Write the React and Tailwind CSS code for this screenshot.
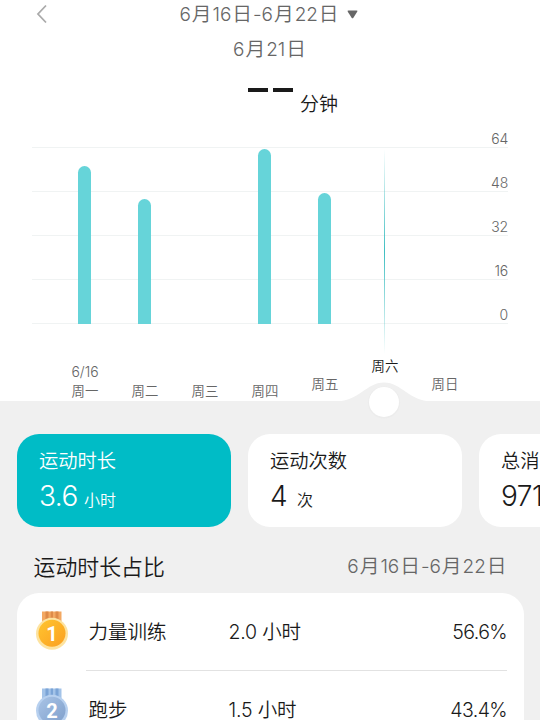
const days = [
  { label: "周一", date: "6/16", bar: 158 },
  { label: "周二", bar: 125 },
  { label: "周三", bar: 0 },
  { label: "周四", bar: 175 },
  { label: "周五", bar: 131, pad: "pb-[7px]" },
  { label: "周六", bar: 0, pad: "pb-[25px]", active: true },
  { label: "周日", bar: 0, pad: "pb-[7px]" },
];

const ticks = [64, 48, 32, 16, 0];

const stats = [
  { title: "运动时长", value: "3.6", unit: "小时", gap: "gap-[6px]", active: true },
  { title: "运动次数", value: "4", unit: "次", gap: "gap-[10px]" },
  { title: "总消", value: "971", gap: "gap-[6px]" },
];

const rows = [
  { rank: 1, name: "力量训练", time: "2.0", percent: "56.6%" },
  { rank: 2, name: "跑步", time: "1.5", percent: "43.4%" },
];

const medalColors = {
  1: { rim: "#fde3a0", from: "#ffc530", to: "#fb9f20", band: "#f3a862", stripe: "#de8a48" },
  2: { rim: "#b7d0ef", from: "#a9c4e6", to: "#7f9fcb", band: "#a3c3e8", stripe: "#7ba4d6" },
};

function Medal({ rank }) {
  const c = medalColors[rank];
  return (
    <svg width="34" height="42" viewBox="0 0 34 42" className="shrink-0">
      <defs>
        <linearGradient id={`medal-${rank}`} x1="0" y1="0" x2="1" y2="1">
          <stop offset="0" stopColor={c.from} />
          <stop offset="1" stopColor={c.to} />
        </linearGradient>
      </defs>
      <path d="M7 .5h19.500v12H7z" fill={c.band} />
      <path d="M10.500 .5h3v12h-3zM15.700 .5h2.300v12h-2.300zM20.500 .5h3v12h-3z" fill={c.stripe} />
      <circle cx="17" cy="22.800" r="16" fill={c.rim} />
      <circle cx="17" cy="22.300" r="13.500" fill={`url(#medal-${rank})`} />
      <text
        x="17"
        y="29.500"
        textAnchor="middle"
        fontSize="20"
        fill="#fff"
        className="font-['Roboto',sans-serif] font-bold"
      >
        {rank}
      </text>
    </svg>
  );
}

// Han characters are set a little larger and looser than the digits.
function DateText({ children }) {
  return (
    <span className="whitespace-nowrap text-[19px] text-[#666]">
      {children.split(/([月日])/).map((part, i) => (
        <span key={i} className={i % 2 ? "px-px text-[19.800px]" : "tracking-[-0.1px]"}>
          {part}
        </span>
      ))}
    </span>
  );
}

function Header() {
  return (
    <header className="relative flex flex-col items-center text-[19px]">
      <svg width="12" height="20" viewBox="0 0 12 20" className="absolute left-9 top-1" fill="none" stroke="#aaa" strokeWidth="1.8">
        <path d="M10 1.500 2 10l8 8.500" />
      </svg>
      <div className="flex h-7 items-center gap-[7px] pr-[3px] pt-px">
        <DateText>6月16日-6月22日</DateText>
        <svg width="11" height="9" viewBox="0 0 11 9" fill="#666" className="mb-px">
          <path d="M1.500.5h8q1.500 0 .7 1.300L6.400 7.700q-.9 1-1.800 0L.8 1.800Q0 .5 1.500.5z" />
        </svg>
      </div>
      <div className="mt-[7px] flex h-7 items-center pt-px">
        <DateText>6月21日</DateText>
      </div>
      <div className="mt-6 flex h-8 gap-[7px] pl-[46px] text-[#1a1a1a]">
        <div className="flex gap-[5px] pt-[1px]">
          <span className="h-1 w-5 bg-[#1a1a1a]" />
          <span className="h-1 w-5 bg-[#1a1a1a]" />
        </div>
        <span className="leading-[35px]">分钟</span>
      </div>
    </header>
  );
}

function Chart() {
  return (
    <section className="relative">
      <div className="mx-8 pt-[5px]">
        {ticks.map((tick, i) => (
          <div
            key={tick}
            className={`flex items-end justify-end border-b border-[#f0f3f3] text-sm leading-[16px] tracking-[-0.2px] text-[#666] ${
              i === 0 ? "h-6" : "h-11"
            }`}
          >
            {tick}
          </div>
        ))}
      </div>
      <div className="absolute bottom-0 left-[54.600px] grid h-full w-[420px] grid-cols-7 items-end justify-items-center">
        {days.map((day) => (
          <div
            key={day.label}
            className="w-[13px] rounded-t-full bg-[#66d4d9]"
            style={{ height: day.bar }}
          />
        ))}
      </div>
      <div className="absolute left-[383.500px] top-[30px] h-[205px] w-[1.500px] bg-linear-to-b from-transparent via-[#3fbfc2] to-transparent" />
    </section>
  );
}

function DayAxis() {
  return (
    <div className="relative h-[77px] pl-[55px]">
      <div className="grid h-full w-[420px] grid-cols-7 items-end text-center text-[13.400px] leading-[19px] text-[#666]">
        {days.map((day) => (
          <div key={day.label} className={`${day.pad ?? ""} ${day.active ? "text-[#1a1a1a]" : ""}`}>
            {day.date && <div className="text-sm">{day.date}</div>}
            <div>{day.label}</div>
          </div>
        ))}
      </div>
      <svg width="108" height="44" viewBox="0 0 108 44" className="absolute left-[330px] top-[57px]">
        <path d="M6 20.500C30 20 36 1.500 54 1.500S78 20 102 20.500z" fill="#f0f0f0" />
        <circle cx="54" cy="21.500" r="16" fill="#ececec" />
        <circle cx="54" cy="21" r="15" fill="#fff" />
      </svg>
    </div>
  );
}

function StatCard({ stat }) {
  return (
    <div
      className={`h-[93px] w-[214.500px] shrink-0 rounded-[22px] pl-[22.500px] pt-[13px] ${
        stat.active ? "bg-[#00bcc6] text-white" : "bg-white text-[#1a1a1a]"
      }`}
    >
      <div className="text-[19.300px] leading-[28px]">{stat.title}</div>
      <div className={`mt-[3px] flex items-baseline leading-[36px] ${stat.gap}`}>
        <span className="text-[28px] tracking-[-0.500px]">{stat.value}</span>
        {stat.unit && <span className="text-base">{stat.unit}</span>}
      </div>
    </div>
  );
}

function RankList() {
  return (
    <div className="mx-[16.500px] mt-[10px] h-[200px] rounded-[22px] bg-white">
      {rows.map((row, i) => (
        <div key={row.rank} className="flex h-[77.500px] items-center pl-[18.500px]">
          <Medal rank={row.rank} />
          <div
            className={`ml-[17px] mr-[16.500px] flex h-full flex-1 items-center pl-[2.500px] pt-[3px] text-[19.500px] text-[#1a1a1a] ${
              i === 0 ? "border-b border-[#e2e2e2]" : ""
            }`}
          >
            <span className="w-[140px]">{row.name}</span>
            <span className="tracking-[-0.200px]">{row.time} 小时</span>
            <span className="ml-auto tracking-[-0.600px]">{row.percent}</span>
          </div>
        </div>
      ))}
    </div>
  );
}

export default function App() {
  return (
    <div className="h-[720px] w-[540px] overflow-hidden bg-[#f0f0f0] font-['Inter','Noto_Sans_CJK_SC',sans-serif] font-[350]">
      <div className="bg-white">
        <Header />
        <Chart />
        <DayAxis />
      </div>
      <div className="flex gap-[16.500px] overflow-hidden pl-[16.500px] pt-[33px]">
        {stats.map((stat) => (
          <StatCard key={stat.title} stat={stat} />
        ))}
      </div>
      <div className="mt-6 flex h-8 items-center justify-between pl-[33.500px] pr-[32.500px]">
        <h2 className="pt-px text-[21.900px] text-[#1a1a1a]">运动时长占比</h2>
        <DateText>6月16日-6月22日</DateText>
      </div>
      <RankList />
    </div>
  );
}
